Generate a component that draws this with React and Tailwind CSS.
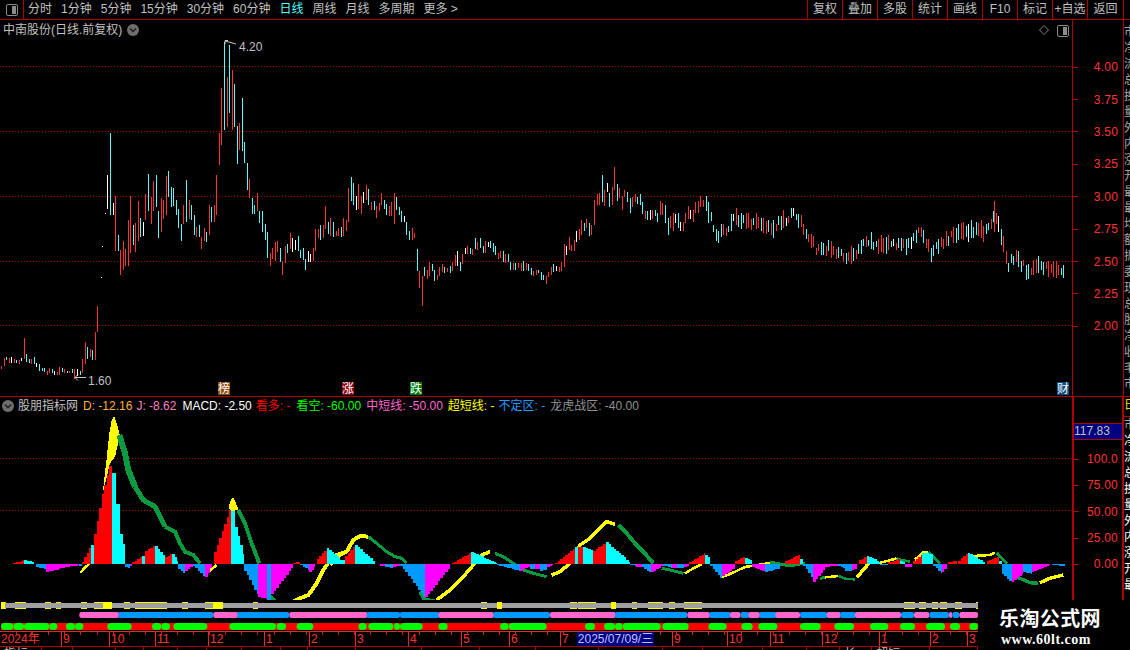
const RED_LINE = "#b00000";

const TABS = ["分时", "1分钟", "5分钟", "15分钟", "30分钟", "60分钟", "日线", "周线", "月线", "多周期", "更多 >"];
const BUTTONS = ["复权", "叠加", "多股", "统计", "画线", "F10", "标记", "+自选", "返回"];
const PRICES = ["4.00", "3.75", "3.50", "3.25", "3.00", "2.75", "2.50", "2.25", "2.00"];
const SUB_TICKS = ["100.0", "75.00", "50.00", "25.00", "0.00"];

const CANDLE_COLORS = { r: "#ff3232", c: "#54fcfc", w: "#ffffff" };
const HIST_COLORS = { r: "#ff0000", c: "#00ffff", m: "#ff00ff", b: "#0099ff" };

// candles read off the screenshot: [x, top, bottom, color], in 3x crop coordinates
const CANDLES_LEFT = [
  [4,198,207,"r"],[13,175,200,"r"],[19,172,180,"c"],[28,175,190,"r"],[34,172,190,"w"],[43,178,190,"r"],[49,180,190,"c"],[58,180,192,"r"],[64,175,183,"w"],[73,113,177,"r"],
  [79,163,187,"c"],[88,178,190,"c"],[94,178,192,"r"],[103,172,192,"c"],[109,190,202,"w"],[118,193,213,"c"],[127,205,215,"c"],[133,205,217,"c"],[142,213,225,"r"],[148,205,220,"r"],
  [157,208,220,"c"],[163,213,225,"w"],[172,217,225,"r"],[178,202,225,"r"],[187,205,217,"c"],[193,208,220,"r"],[202,213,220,"c"],[208,213,220,"r"],[217,208,220,"c"],[223,208,238,"r"],
  [232,208,228,"w"],[241,213,225,"c"],[247,178,220,"r"],[256,127,192,"r"],[262,142,177,"c"],[271,148,172,"r"],[277,150,180,"c"],[286,97,180,"r"],[292,18,96,"r"],
];
const CANDLES_A = [
  [122,740,743,"w"],[127,648,651,"w"],[136,549,552,"w"],
  [142,435,537,"w"],[151,310,557,"c"],[160,520,555,"w"],[166,498,662,"r"],[175,615,662,"c"],[181,660,735,"r"],[190,633,720,"r"],[196,657,708,"r"],[205,570,708,"r"],[211,498,668,"r"],
  [220,585,645,"c"],[226,580,668,"r"],[235,513,633,"r"],[241,563,620,"c"],[250,575,618,"w"],[256,492,570,"r"],[265,432,543,"c"],[274,500,582,"r"],[280,453,543,"r"],[289,435,530,"c"],
  [295,543,623,"c"],[304,503,605,"r"],[310,510,567,"r"],[319,438,555,"r"],[325,423,500,"c"],[334,470,530,"c"],[340,475,530,"c"],[349,510,555,"c"],[355,537,593,"c"],[364,582,632,"c"],
  [370,525,582,"r"],[379,450,575,"c"],[388,510,567,"r"],[394,525,570,"c"],[403,555,615,"c"],[409,590,620,"r"],[418,585,620,"c"],[424,620,657,"r"],[433,593,633,"r"],[439,605,635,"c"],
  [448,525,615,"r"],[454,530,575,"c"],[463,525,575,"r"],[469,435,555,"r"],[478,310,405,"r"],[484,175,347,"r"],[493,35,298,"c"],[502,140,290,"r"],[508,45,248,"c"],[517,120,300,"r"],
  [523,162,290,"c"],[532,288,403,"c"],[538,280,360,"r"],[547,205,365,"c"],[553,337,400,"c"],[562,400,480,"c"],[568,447,503,"r"],[577,503,552,"c"],[583,525,552,"c"],[592,490,543,"r"],
  [598,543,580,"c"],[607,543,607,"c"],[616,583,632,"c"],[622,607,685,"c"],[631,670,710,"r"],[637,655,688,"r"],[646,635,693,"r"],[652,632,665,"r"],[661,655,698,"c"],[667,695,735,"r"],
  [676,648,700,"r"],[682,643,670,"c"],[691,610,658,"r"],[697,625,668,"w"],[706,630,660,"w"],[715,618,663,"c"],[721,660,685,"c"],[730,655,690,"c"],[736,688,722,"c"],[745,663,695,"w"],
  [751,672,695,"w"],[760,655,695,"r"],[766,598,665,"r"],[775,597,625,"r"],[781,585,630,"c"],[790,585,625,"r"],[796,528,597,"r"],[805,575,610,"c"],[811,565,620,"r"],[820,575,620,"c"],
  [829,603,618,"r"],[835,595,618,"r"],
];
const CANDLES_B = [
  [4,200,230,"c"],[10,175,228,"r"],[19,180,212,"r"],[25,85,188,"r"],[34,52,125,"c"],[40,70,137,"c"],[49,108,150,"w"],[55,72,147,"r"],[64,108,162,"r"],[70,95,128,"w"],[79,75,120,"r"],
  [85,87,135,"c"],[94,127,152,"r"],[103,123,150,"c"],[109,137,173,"r"],[118,128,152,"r"],[124,98,135,"r"],[133,120,147,"c"],[139,133,165,"c"],[148,137,167,"r"],[154,125,167,"r"],
  [163,98,192,"r"],[169,110,150,"c"],[178,140,165,"c"],[184,152,185,"c"],[193,168,187,"w"],[199,185,225,"c"],[208,212,240,"c"],[217,203,240,"r"],[223,218,233,"r"],[232,267,332,"c"],
  [238,333,383,"r"],[247,347,437,"r"],[253,320,347,"c"],[262,330,357,"r"],[268,305,348,"r"],[277,312,333,"c"],[283,330,362,"c"],[292,345,360,"r"],[298,320,348,"r"],[307,312,337,"r"],
  [313,320,338,"c"],[322,323,335,"r"],[331,318,338,"c"],[337,305,332,"r"],[346,285,318,"r"],[352,273,318,"w"],[361,305,332,"c"],[367,282,312,"r"],[376,263,282,"w"],[382,258,282,"r"],
  [391,263,282,"c"],[397,267,285,"r"],[406,233,265,"c"],[412,245,270,"r"],[421,233,263,"c"],[430,258,278,"c"],[436,243,278,"r"],[445,247,263,"w"],[451,243,263,"c"],[460,250,278,"c"],
  [466,258,285,"c"],[475,280,297,"r"],[481,273,295,"r"],[490,273,307,"c"],[496,282,308,"r"],[505,282,305,"c"],[511,307,332,"c"],[520,308,330,"r"],[526,308,330,"c"],[535,308,323,"r"],
  [544,308,333,"r"],[550,303,333,"c"],[559,310,330,"r"],[565,312,333,"c"],[574,325,345,"c"],[580,333,347,"r"],[589,330,345,"r"],[595,330,338,"c"],[604,337,360,"c"],[610,345,360,"c"],
  [619,348,372,"r"],[625,335,350,"r"],[634,322,345,"r"],[640,312,335,"c"],[649,318,333,"w"],[658,320,335,"r"],[664,305,333,"r"],[673,252,320,"r"],[679,258,285,"w"],[688,232,270,"r"],
  [694,255,273,"r"],[703,240,273,"r"],[709,213,247,"w"],[718,208,240,"r"],[724,180,225,"r"],[733,190,215,"c"],[739,178,205,"r"],[748,190,228,"c"],[754,195,225,"r"],[763,120,195,"r"],
  [772,102,135,"r"],[778,100,135,"r"],[787,45,125,"c"],[793,90,138,"r"],[802,70,97,"w"],[808,98,140,"c"],[817,82,137,"r"],[823,22,90,"r"],[832,72,123,"c"],[838,85,115,"r"],
  [847,108,150,"r"],[853,90,112,"r"],[862,97,128,"c"],[871,113,158,"c"],[877,110,140,"r"],[886,102,125,"r"],[892,110,130,"c"],[901,102,135,"c"],[907,127,163,"c"],[916,153,178,"r"],
  [922,153,180,"c"],[931,150,180,"w"],[937,150,178,"r"],[946,150,168,"c"],[952,160,187,"c"],[961,123,165,"r"],[967,130,165,"r"],[976,135,190,"c"],[985,175,227,"c"],[991,168,205,"r"],
  [1000,158,212,"r"],[1006,162,188,"w"],[1015,160,205,"c"],[1021,187,213,"w"],[1030,185,212,"r"],[1036,158,188,"r"],[1045,138,178,"r"],[1051,150,178,"w"],[1060,150,185,"r"],
  [1066,125,158,"r"],[1075,122,158,"r"],[1081,108,140,"r"],[1090,120,140,"r"],[1099,108,152,"c"],[1105,125,188,"c"],
];
// tail of the chart, center line only: [x, y]
const TAIL_MID = [
  [710,218],[716,235],[725,232],[735,217],[745,222],[760,225],[770,228],[780,222],[795,214],[805,232],[815,248],[830,248],[845,258],[855,258],[862,240],[875,244],
  [890,243],[905,246],[918,230],[930,252],[945,240],[960,228],[975,230],[985,230],[995,215],[1000,235],[1008,265],[1015,255],[1025,270],[1035,268],[1050,267],[1065,270],
];

function tailCandles() {
  let seed = 17;
  const rnd = () => {
    seed = (seed * 16807) % 2147483647;
    return seed / 2147483647;
  };
  const out = [];
  for (let x = 710.5; x < 1065; x += 2.5) {
    const i = TAIL_MID.findIndex((p) => p[0] >= x);
    const a = TAIL_MID[Math.max(i - 1, 0)];
    const b = TAIL_MID[i];
    const mid = a[1] + ((b[1] - a[1]) * (x - a[0])) / (b[0] - a[0] || 1) + (rnd() - 0.5) * 7;
    const half = 3 + rnd() * 6;
    const n = rnd();
    out.push({ x: Math.round(x), top: mid - half, bottom: mid + half, color: n < 0.47 ? "r" : n < 0.92 ? "c" : "w" });
  }
  // the spike near the right end
  out.push({ x: 994, top: 201, bottom: 232, color: "r" });
  return out;
}

const allCandles = [
  ...CANDLES_LEFT.map(([x, t, b, color]) => ({ x: Math.round(x / 3), top: 300 + t / 3, bottom: 300 + b / 3, color })),
  ...CANDLES_A.map(([x, t, b, color]) => ({ x: Math.round(60 + x / 3), top: 30 + t / 3, bottom: 30 + b / 3, color })),
  ...CANDLES_B.map(([x, t, b, color]) => ({ x: Math.round(340 + x / 3), top: 160 + t / 3, bottom: 160 + b / 3, color })),
  ...tailCandles(),
];

// histogram segments: [x0, x1, color, h0, h1]
const HIST_A = [
  [0,58,"m",-12,-3],[58,65,"b",-5,-3],[65,92,"r",5,58],[92,102,"c",58,58],[102,125,"r",90,210],[125,156,"r",210,325],[156,168,"c",272,272],[168,180,"c",180,180],[180,195,"c",90,30],
  [195,210,"b",-10,-15],[210,216,"m",-6,-6],[216,245,"r",5,25],[245,255,"c",25,25],[255,285,"r",38,60],[285,316,"c",55,15],[316,336,"r",20,32],[336,354,"c",30,5],[354,375,"b",-15,-30],
  [375,398,"m",-20,-5],[398,435,"b",-5,-42],[435,455,"m",-38,-5],[462,513,"r",35,180],[513,525,"c",160,160],[525,552,"c",110,15],[552,594,"b",-20,-100],[594,621,"m",-100,-105],
  [621,633,"b",-108,-108],[633,700,"m",-90,-3],[700,720,"r",3,8],[720,748,"b",-3,-22],[748,765,"m",-25,-8],[770,800,"r",15,48],[800,840,"c",48,15],
];
const HIST_B = [
  [0,15,"c",12,12],[15,45,"r",25,58],[45,105,"c",58,3],[120,135,"m",-6,-6],[135,160,"b",-8,-14],[160,180,"m",-8,-4],[180,205,"b",-5,-35],[205,255,"b",-35,-105],[255,330,"m",-100,-5],
  [335,393,"r",3,35],[393,470,"c",35,3],[470,540,"b",-3,-22],[540,570,"m",-20,-5],[570,585,"b",-15,-15],[585,600,"m",-15,-15],[600,622,"b",-20,-15],[622,640,"m",-10,-3],[645,705,"r",3,50],
  [705,713,"c",50,50],[713,730,"r",52,52],[730,760,"c",52,40],[760,798,"r",40,65],[798,870,"c",65,3],[870,888,"b",-3,-6],[888,905,"m",-8,-8],[905,933,"b",-10,-28],[933,970,"m",-25,-3],
  [970,995,"b",-5,-12],[995,1012,"m",-12,-12],[1012,1032,"b",-12,-12],[1032,1048,"m",-8,-3],[1048,1095,"r",5,33],[1095,1110,"c",28,12],
];
const HIST_C = [
  [13,24,"r",3,12],[24,34,"c",12,3],[36,46,"b",-9,-18],[46,60,"m",-24,-15],
  [710,722,"b",-6,-51],[722,735,"m",-36,-9],[735,745,"r",9,24],[745,752,"c",18,9],[752,765,"m",-9,-24],[765,780,"b",-24,-12],[785,800,"r",9,30],
];
const HIST_D = [
  [0,10,"c",15,3],[10,40,"b",-5,-50],[40,75,"m",-55,-12],[75,115,"m",-10,-3],[115,135,"b",-5,-15],[135,155,"b",-20,-22],[155,172,"m",-18,-8],[178,200,"r",12,25],[200,240,"c",25,5],[240,265,"b",-3,-3],
  [265,300,"r",5,15],[300,315,"c",8,3],[315,335,"m",-8,-8],[340,365,"r",8,30],[365,400,"c",33,30],[400,425,"b",-5,-30],[425,440,"m",-25,-5],[445,470,"r",5,10],[475,503,"r",10,35],[503,555,"c",33,3],
  [560,597,"r",8,25],[597,605,"c",8,3],[605,635,"b",-30,-60],[635,670,"m",-55,-25],[670,695,"b",-25,-30],[695,750,"m",-25,-3],[755,795,"b",-4,-5],
];

function histBars() {
  const bars = [];
  const add = (segs, toX) => {
    segs.forEach(([x0, x1, color, h0, h1]) => {
      const a = toX(x0);
      const b = toX(x1);
      for (let x = a; x < b - 0.5; x += 2.5) {
        const left = Math.round(x);
        const right = Math.round(Math.min(x + 2.5, b));
        const h = Math.round((h0 + ((h1 - h0) * (x - a)) / (b - a || 1)) / 3);
        bars.push({ x: left, w: right - left, h, color });
      }
    });
  };
  add(HIST_A, (v) => 60 + v / 3);
  add(HIST_B, (v) => 340 + v / 3);
  add(HIST_C, (v) => v);
  add(HIST_D, (v) => 800 + v / 3);
  return bars;
}

const at = (bx, by, list) => list.map(([x, y]) => `${bx + x / 3},${by + y / 3}`).join(" ");

const YELLOW = "#ffff00";
const GREEN = "#0a9a3f";
const CURVES = [
  [YELLOW, 2.5, at(60, 400, [[62,518],[72,505],[88,492]])],
  [GREEN, 6, at(60, 400, [[178,105],[195,160],[205,210],[225,260]])],
  [GREEN, 5, at(60, 400, [[225,260],[250,300],[285,320],[300,350],[315,380]])],
  [GREEN, 4, at(60, 400, [[315,380],[345,395],[360,430],[375,455],[400,465],[420,490]])],
  [YELLOW, 2.5, at(60, 400, [[445,515],[470,495]])],
  [GREEN, 4, at(60, 400, [[535,330],[555,370],[575,430],[598,490]])],
  [GREEN, 4, at(60, 400, [[620,580],[635,595],[650,610],[680,625]])],
  [YELLOW, 4, at(60, 400, [[700,605],[720,595],[745,585],[770,550],[790,510],[810,480],[830,465],[860,455]])],
  [YELLOW, 4, at(340, 515, [[-30,150],[0,120],[20,110],[40,75],[60,63],[85,65]])],
  [GREEN, 3, at(340, 515, [[85,65],[110,85],[140,110],[165,125],[185,130],[200,145]])],
  [GREEN, 4, at(340, 515, [[240,230],[255,255],[285,258]])],
  [YELLOW, 3.5, at(340, 515, [[290,255],[330,225],[370,185],[400,150],[425,120],[450,110]])],
  [GREEN, 3, at(340, 515, [[465,115],[490,125],[520,145],[550,165],[580,175],[620,185]])],
  [YELLOW, 3.5, at(340, 515, [[635,180],[660,170],[690,145],[720,90],[750,70],[780,40],[800,20],[825,28]])],
  [GREEN, 4, at(340, 515, [[835,30],[860,55],[885,85],[910,110],[940,145]])],
  [GREEN, 3, at(340, 515, [[965,160],[990,165],[1030,175]])],
  [YELLOW, 2.5, at(340, 515, [[1035,175],[1060,160],[1085,148]])],
  [YELLOW, 2.5, "722,577 730,574 745,567 770,563"],
  [GREEN, 3, "770,562 790,566 805,563"],
  [GREEN, 3, at(800, 540, [[60,115],[75,112]])],
  [YELLOW, 2.5, at(800, 540, [[75,112],[115,108]])],
  [GREEN, 2.5, at(800, 540, [[115,108],[140,117],[165,118]])],
  [YELLOW, 3.5, at(800, 540, [[170,112],[190,90],[210,65]])],
  [YELLOW, 2.5, at(800, 540, [[240,68],[265,62],[290,55]])],
  [GREEN, 2.5, at(800, 540, [[290,55],[305,60],[330,65]])],
  [YELLOW, 3, at(800, 540, [[345,60],[370,37],[385,37]])],
  [GREEN, 3, at(800, 540, [[385,37],[410,60],[420,70]])],
  [YELLOW, 2.5, at(800, 540, [[520,48],[570,45],[585,38]])],
  [GREEN, 3, at(800, 540, [[590,38],[610,60],[622,70]])],
  [GREEN, 3.5, at(800, 540, [[640,105],[660,115],[690,128],[715,130]])],
  [YELLOW, 3.5, at(800, 540, [[720,128],[750,115],[790,105]])],
];

// strips under the indicator, in 3x crop coordinates
const MARKS = [
  ...[[3,18],[45,78],[135,153],[168,183],[243,260],[282,308],[308,335,1],[372,390],[405,418],[418,470],[470,502],[547,564],[615,640],[640,668,1],[760,775]].map(([a, b, s]) => [a / 3, b / 3, s]),
  ...[[243,262],[290,306,1],[510,530],[535,565],[565,588],[633,648,1],[695,710],[745,790],[808,825],[852,905]].map(([a, b, s]) => [400 + a / 3, 400 + b / 3, s]),
  ...[[312,345],[358,378],[395,415],[420,440],[465,485],[527,534]].map(([a, b, s]) => [800 + a / 3, 800 + b / 3, s]),
];
const TREND = [
  ...[[238,358,"p"],[355,640,"b"],[640,715,"p"],[712,868,"b"],[868,1103,"p"],[1100,1200,"b"]].map(([a, b, c]) => [a / 3, b / 3, c]),
  ...[[0,118,"b"],[115,282,"p"],[280,450,"b"],[450,648,"p"],[645,862,"b"],[862,930,"p"],[928,992,"b"],[990,1022,"p"],[1022,1048,"b"],[1045,1080,"p"],[1078,1130,"b"],[1126,1200,"p"]].map(([a, b, c]) => [400 + a / 3, 400 + b / 3, c]),
  ...[[0,82,"b"],[80,122,"p"],[120,168,"b"],[165,303,"p"],[303,342,"b"],[342,388,"p"],[388,447,"b"],[447,457,"p"],[457,478,"b"],[478,534,"p"]].map(([a, b, c]) => [800 + a / 3, 800 + b / 3, c]),
];
const PILLS = [
  ...[[3,40],[40,72],[72,148],[148,172],[198,225],[225,250],[322,395],[456,484],[484,510],[520,622],[688,828],[830,858],[890,940],[1075,1100],[1105,1180],[1182,1200]].map(([a, b]) => [a / 3, b / 3]),
  ...[[0,68],[115,143],[300,326],[326,440],[555,585],[612,645],[645,668],[668,782],[787,866],[925,980],[1024,1058],[1075,1132]].map(([a, b]) => [400 + a / 3, 400 + b / 3]),
  ...[[0,62],[103,162],[210,265],[300,345],[378,435],[450,480],[508,534]].map(([a, b]) => [800 + a / 3, 800 + b / 3]),
];

const DATE_CELLS = [
  [61, "2024年"], [48, "9"], [46, "10"], [53, "11"], [56, "12"], [45, "1"], [46, "2"], [53, "3"], [53, "4"], [48, "5"], [51, "6"], [112, "7"], [55, "9"], [43, "10"], [52, "11"], [57, "12"], [51, "1"], [37, "2"], [11, "3"],
];
const BOTTOM_CELLS = [42, 31, 43, 28, 34, 29, 35, 39, 27, 48, 66, 58, 56, 63, 64, 40, 60, 44, 33, 32, 58, 48];

const SIDE_TEXT = ["市", "净", "流", "总", "换", "量", "外", "内", "涨", "开", "最", "最", "均", "额", "振", "委", "现", "总", "股", "净", "收", "毛", "市", "主", "超"];

function Dotted({ y, x2 = 1072 }) {
  return <line x1="0" x2={x2} y1={y + 0.5} y2={y + 0.5} stroke="#a00000" strokeDasharray="1 2" />;
}

function PanelIcon() {
  return (
    <svg width="12" height="12" viewBox="0 0 12 12" className="block">
      <rect x="0.5" y="0.5" width="11" height="11" rx="1.5" fill="none" stroke="#8a8a8a" />
      <rect x="6" y="2" width="4" height="8" fill="#8a8a8a" />
    </svg>
  );
}

function RoundChevron() {
  return (
    <span className="flex h-3 w-3 items-center justify-center rounded-full bg-[#6e6e6e]">
      <svg width="8" height="6" viewBox="0 0 8 6">
        <path d="M1 1.5 L4 4.5 L7 1.5" fill="none" stroke="#1c1c1c" strokeWidth="1.4" />
      </svg>
    </span>
  );
}

function Badge({ text, bg, className }) {
  return (
    <span className={`absolute top-[362px] flex h-[13px] w-[12px] items-center justify-center text-[12px] leading-none text-white ${bg} ${className}`}>
      {text}
    </span>
  );
}

function Toolbar() {
  return (
    <div className="flex h-5 items-stretch border-b border-[#b00000] text-[12px] leading-[19px] text-[#c0c0c0]">
      <div className="flex w-[24px] shrink-0 items-center justify-center border-r border-[#b00000]">
        <PanelIcon />
      </div>
      <div className="ml-[4px] flex gap-[9px]">
        {TABS.map((t) => (
          <span key={t} className={t === "日线" ? "text-[#54fcfc]" : ""}>
            {t}
          </span>
        ))}
      </div>
      <div className="ml-auto flex border-r border-[#b00000] mr-[6px]">
        {BUTTONS.map((b, i) => (
          <span key={b} className={`border-l border-[#b00000] text-center ${i === BUTTONS.length - 1 ? "w-[36px]" : "w-[35px]"}`}>
            {b}
          </span>
        ))}
      </div>
    </div>
  );
}

function PriceChart() {
  return (
    <svg width="1072" height="376" viewBox="0 20 1072 376" shapeRendering="crispEdges" className="block">
      {[66, 131, 196, 261, 325].map((y) => (
        <Dotted key={y} y={y} />
      ))}
      {allCandles.map((c, i) => (
        <rect key={i} x={c.x} y={Math.round(c.top)} width="1" height={Math.max(Math.round(c.bottom - c.top), 1)} fill={CANDLE_COLORS[c.color]} />
      ))}
      <g shapeRendering="auto" fill="none" stroke="#c8c8c8" strokeWidth="1">
        <path d="M225 44 V40.5 H228 M225 41 L236 44" />
        <path d="M86 377.5 H75 M78 374.5 L75 377.5 L78 380.5" />
      </g>
    </svg>
  );
}

function SubChart() {
  return (
    <svg width="1072" height="203" viewBox="0 397 1072 203" shapeRendering="crispEdges" className="block">
      <Dotted y={458} />
      <Dotted y={510} />
      <polygon points={at(60, 400, [[128,280],[140,175],[148,100],[155,60],[163,48],[172,75],[180,108],[165,170],[150,190]])} fill={YELLOW} />
      <polygon points={at(60, 400, [[505,325],[512,300],[520,293],[528,310],[535,328],[515,335]])} fill={YELLOW} />
      {CURVES.map(([color, w, pts], i) => (
        <polyline key={i} points={pts} fill="none" stroke={color} strokeWidth={w} />
      ))}
      {histBars().map((b, i) => (
        <rect key={i} x={b.x} y={b.h > 0 ? 564 - b.h : 564} width={b.w} height={Math.abs(b.h)} fill={HIST_COLORS[b.color]} />
      ))}
    </svg>
  );
}

function Strips() {
  return (
    <svg width="978" height="31" viewBox="0 600 978 31" shapeRendering="crispEdges" className="block">
      {MARKS.filter((m) => !m[2]).map(([a, b], i) => (
        <rect key={i} x={a} y="602" width={b - a} height="7" fill="#ffff00" />
      ))}
      <rect x="5" y="603" width="973" height="5" fill="#a0a0a0" />
      {MARKS.filter((m) => m[2]).map(([a, b], i) => (
        <rect key={i} x={a} y="602" width={b - a} height="7" fill="#ffff00" />
      ))}
      {TREND.map(([a, b, c], i) => (
        <rect key={i} x={a} y="612" width={b - a} height="6" rx="2" fill={c === "p" ? "#ff66cc" : "#0099ff"} shapeRendering="auto" />
      ))}
      <rect x="1" y="623" width="977" height="7" fill="#ff0000" />
      {PILLS.map(([a, b], i) => (
        <rect key={i} x={a} y="623" width={b - a} height="7" rx="3.5" fill="#00ff00" shapeRendering="auto" />
      ))}
    </svg>
  );
}

function DateAxis() {
  const ticks = [];
  for (let x = 16; x < 978; x += 16.1) ticks.push(Math.round(x));
  return (
    <div className="relative flex h-[15px] overflow-hidden border-t border-[#ff2020] text-[12px] leading-[15px] text-[#ff3232]">
      {DATE_CELLS.map(([w, label], i) => (
        <span key={i} style={{ width: w }} className={`shrink-0 pl-[1px] ${i ? "border-l border-[#ff2020]" : ""}`}>
          {label}
        </span>
      ))}
      <svg width="978" height="3" className="absolute left-0 top-0" shapeRendering="crispEdges">
        {ticks.map((x) => (
          <rect key={x} x={x} y="0" width="1" height="3" fill="#d02020" />
        ))}
      </svg>
      <span className="absolute left-[577px] top-0 flex h-[14px] w-[77px] items-center justify-center bg-[#000080] text-[12px] text-[#c0c0ff]">
        2025/07/09/三
      </span>
    </div>
  );
}

function BottomTabs() {
  return (
    <div className="flex h-[4px] overflow-hidden border-t border-[#b00000] text-[12px] leading-[12px] text-[#c0c0c0]">
      {BOTTOM_CELLS.map((w, i) => (
        <span key={i} style={{ width: w }} className="shrink-0 border-r border-[#b00000] pl-[4px] pt-[1px]">
          {i === 0 ? "指标" : i === 19 ? "长" : i === 20 ? "超短" : ""}
        </span>
      ))}
    </div>
  );
}

function Sidebar({ items, className }) {
  return (
    <div className={`w-[6px] overflow-hidden text-[12px] leading-[16px] whitespace-nowrap text-[#a8a8a8] ${className}`}>
      {items}
    </div>
  );
}

export default function App() {
  return (
    <div className="flex h-[650px] w-[1130px] flex-col overflow-hidden bg-black font-['Liberation_Sans','Noto_Sans_CJK_SC',sans-serif] text-[12px]">
      <Toolbar />

      {/* K线 */}
      <div className="flex h-[377px] border-b border-[#b00000]">
        <div className="relative w-[1072px] shrink-0">
          <PriceChart />
          <div className="absolute left-[3px] top-[2px] flex items-center gap-[5px] leading-[16px] text-[#c0c0c0]">
            <span>中南股份(日线.前复权)</span>
            <RoundChevron />
          </div>
          <svg width="10" height="10" viewBox="0 0 10 10" className="absolute left-[1039px] top-[5px]">
            <path d="M5 0.5 L9.5 5 L5 9.5 L0.5 5 Z" fill="none" stroke="#808080" />
          </svg>
          <span className="absolute left-[1057px] top-[5px]">
            <PanelIcon />
          </span>
          <span className="absolute left-[239px] top-[18px] text-[#c0c0c0]">4.20</span>
          <span className="absolute left-[88px] top-[352px] text-[#c0c0c0]">1.60</span>
          <Badge text="榜" bg="bg-[#8a4a10]" className="left-[218px]" />
          <Badge text="涨" bg="bg-[#8a0010]" className="left-[342px]" />
          <Badge text="跌" bg="bg-[#007a10]" className="left-[410px]" />
          <Badge text="财" bg="bg-[#0a4a80]" className="left-[1057px]" />
        </div>
        <div className="w-[52px] shrink-0 border-x border-[#b00000] pt-[31px] text-[#ff3232]">
          {PRICES.map((p) => (
            <div key={p} className="flex h-[32.4px] items-center pr-[5px]">
              <span className="h-px w-[5px] bg-[#b00000]" />
              <span className="ml-auto tracking-[0.2px]">{p}</span>
            </div>
          ))}
        </div>
        <Sidebar
          className="pt-[4px]"
          items={SIDE_TEXT.slice(0, 23).map((s, i) => (
            <div key={i}>{s}</div>
          ))}
        />
      </div>

      {/* 指标 */}
      <div className="flex h-[203px]">
        <div className="relative w-[1072px] shrink-0">
          <SubChart />
          <div className="absolute left-[2px] top-[1px] flex items-center whitespace-nowrap leading-[16px]">
            <RoundChevron />
            <span className="ml-[4px] text-[#c0c0c0]">股朋指标网</span>
            <span className="ml-[5px] text-[#ffb040]">D: -12.16</span>
            <span className="ml-[4px] text-[#ff80c0]">J: -8.62</span>
            <span className="ml-[6px] text-white">MACD: -2.50</span>
            <span className="ml-[4px] text-[#ff0000]">看多: -</span>
            <span className="ml-[6px] text-[#00ff00]">看空: -60.00</span>
            <span className="ml-[5px] text-[#ff66cc]">中短线: -50.00</span>
            <span className="ml-[5px] text-[#ffff00]">超短线: -</span>
            <span className="ml-[4px] text-[#1e9bff]">不定区: -</span>
            <span className="ml-[5px] text-[#909090]">龙虎战区: -40.00</span>
          </div>
        </div>
        <div className="relative w-[52px] shrink-0 border-x-2 border-[#b00000] pt-[49px] text-[#ff3232]">
          {SUB_TICKS.map((t) => (
            <div key={t} className="flex h-[26.3px] items-center pr-[4px]">
              <span className="h-px w-[5px] bg-[#b00000]" />
              <span className="ml-auto tracking-[0.2px]">{t}</span>
            </div>
          ))}
          <div className="absolute inset-x-0 top-[26px] h-[17px] border-y border-[#b00000] bg-[#000080] leading-[15px] text-[#c0c0c0]">
            117.83
          </div>
        </div>
        <Sidebar
          className="flex flex-col"
          items={
            <>
              <div className="h-[20px] border-b border-[#b00000] text-[#e0e000]">日</div>
              {SIDE_TEXT.slice(0, 11).map((s, i) => (
                <div key={i} className={i ? "text-white" : ""}>
                  {s}
                </div>
              ))}
            </>
          }
        />
      </div>

      {/* 底部 */}
      <div className="flex flex-1">
        <div className="w-[978px] shrink-0">
          <Strips />
          <DateAxis />
          <BottomTabs />
        </div>
        <div className="ml-[21px] flex flex-col pt-[5px] text-white">
          <span className="font-['Noto_Sans_CJK_SC',sans-serif] text-[20px] leading-[26px] font-bold tracking-[0.4px]">乐淘公式网</span>
          <span className="mt-[2px] ml-[2px] font-['Liberation_Serif',serif] text-[14px] leading-[14px] font-bold tracking-[0.5px]">www.60lt.com</span>
        </div>
      </div>
    </div>
  );
}
